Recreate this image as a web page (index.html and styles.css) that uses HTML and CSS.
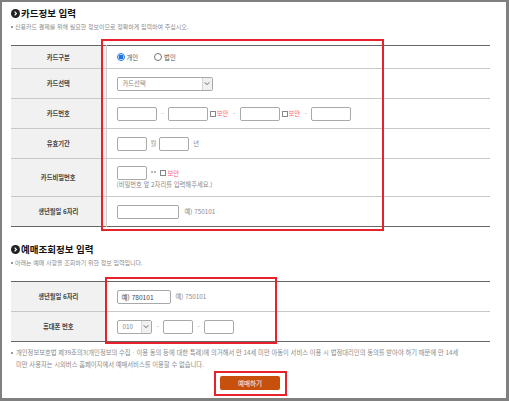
FILE: index.html
```html
<!DOCTYPE html>
<html lang="ko">
<head>
<meta charset="utf-8">
<link rel="stylesheet" href="styles.css">
</head>
<body>
<div class="frame">
  <div class="page">
    <h2 class="sec-title">
      <svg class="sec-icon" viewBox="0 0 10 10" width="9" height="9"><circle cx="5" cy="5" r="5" fill="#222"/><path d="M4 3 L6 5 L4 7" fill="none" stroke="#fff" stroke-width="1.3"/></svg>
      카드정보 입력
    </h2>
    <p class="sec-desc"><span class="bullet"></span>신용카드 결제를 위해 필요한 정보이므로 정확하게 입력하여 주십시오.</p>

    <table class="form-table t1">
      <tr class="r24">
        <th>카드구분</th>
        <td>
          <div class="line">
            <span class="radio on"></span><span class="rlabel">개인</span>
            <span class="radio gap"></span><span class="rlabel">법인</span>
          </div>
        </td>
      </tr>
      <tr class="r30">
        <th>카드선택</th>
        <td>
          <div class="select w96"><span class="sel-text">카드선택</span><span class="sel-arrow"><svg viewBox="0 0 8 6" width="6" height="5"><path d="M1 1.5 L4 4.5 L7 1.5" fill="none" stroke="#555" stroke-width="1.2"/></svg></span></div>
        </td>
      </tr>
      <tr class="r30">
        <th>카드번호</th>
        <td>
          <div class="line">
            <span class="inp w40"></span><span class="dash">-</span><span class="inp w40"></span><span class="chk"></span><span class="sec">보안</span><span class="dash">-</span><span class="inp w40"></span><span class="chk"></span><span class="sec">보안</span><span class="dash">-</span><span class="inp w40"></span>
          </div>
        </td>
      </tr>
      <tr class="r30">
        <th>유효기간</th>
        <td>
          <div class="line">
            <span class="inp w30"></span><span class="unit">월</span><span class="inp w30"></span><span class="unit">년</span>
          </div>
        </td>
      </tr>
      <tr class="r38">
        <th>카드비밀번호</th>
        <td>
          <div class="line">
            <span class="inp w30"></span><span class="stars">**</span><span class="chk"></span><span class="sec">보안</span>
          </div>
          <div class="hint">(비밀번호 앞 2자리를 입력해주세요.)</div>
        </td>
      </tr>
      <tr class="r30 last">
        <th>생년월일 6자리</th>
        <td>
          <div class="line">
            <span class="inp w62"></span><span class="ex">예) 750101</span>
          </div>
        </td>
      </tr>
    </table>

    <h2 class="sec-title s2">
      <svg class="sec-icon" viewBox="0 0 10 10" width="9" height="9"><circle cx="5" cy="5" r="5" fill="#222"/><path d="M4 3 L6 5 L4 7" fill="none" stroke="#fff" stroke-width="1.3"/></svg>
      예매조회정보 입력
    </h2>
    <p class="sec-desc"><span class="bullet"></span>아래는 예매 사항을 조회하기 위한 정보 입력입니다.</p>

    <table class="form-table t2">
      <tr class="r30">
        <th>생년월일 6자리</th>
        <td>
          <div class="line">
            <span class="inp w54 filled">예) 780101</span><span class="ex ex2">예) 750101</span>
          </div>
        </td>
      </tr>
      <tr class="r30 last">
        <th>휴대폰 번호</th>
        <td>
          <div class="line">
            <div class="select w35"><span class="sel-text">010</span><span class="sel-arrow"><svg viewBox="0 0 8 6" width="6" height="5"><path d="M1 1.5 L4 4.5 L7 1.5" fill="none" stroke="#555" stroke-width="1.2"/></svg></span></div><span class="dash">-</span><span class="inp w30"></span><span class="dash">-</span><span class="inp w30"></span>
          </div>
        </td>
      </tr>
    </table>

    <div class="note"><span class="bullet"></span><span class="nl">개인정보보호법 제39조의3(개인정보의 수집ㆍ이용 동의 등에 대한 특례)에 의거해서 만 14세 미만 아동이 서비스 이용 시 법정대리인의 동의를 받아야 하기 때문에 만 14세</span><span class="nl">미만 사용자는 시외버스 홈페이지에서 예매서비스를 이용할 수 없습니다.</span></div>

    <div class="btn-row"><div class="btn">예매하기</div></div>

    <div class="mark m1"></div>
    <div class="mark m2"></div>
    <div class="mark m3"></div>
  </div>
</div>
</body>
</html>
```

FILE: styles.css
```css
* { box-sizing: border-box; }
html, body { margin: 0; padding: 0; }
body {
  background: #808080;
  width: 509px;
  height: 401px;
  overflow: hidden;
  font-family: "Noto Sans CJK KR", "Noto Sans", sans-serif;
}
.frame {
  margin: 2px 0 0 2px;
  width: 504px;
  height: 396px;
  background: #fff;
  overflow: hidden;
}
.page {
  position: relative;
  padding: 5px 17px 0 9px;
  height: 100%;
}
.sec-title {
  margin: 0;
  height: 12px;
  line-height: 12px;
  font-size: 9.5px;
  font-weight: bold;
  color: #111;
  display: flex;
  align-items: center;
  gap: 1px;
}
.sec-title.s2 { margin-top: 16px; }
.sec-icon { display: block; }
.sec-desc {
  margin: 3px 0 0 0;
  height: 10px;
  line-height: 10px;
  font-size: 6px;
  color: #8a8a8a;
  display: flex;
  align-items: center;
}
.bullet {
  display: inline-block;
  width: 2px;
  height: 2px;
  background: #999;
  margin-right: 2px;
  flex: none;
}
.form-table {
  margin-top: 13px;
  width: 479px;
  border-collapse: collapse;
  border-top: 1px solid #666;
  border-bottom: 1px solid #666;
}
.form-table th {
  width: 95px;
  background: #f1f1f1;
  border-right: 1px solid #d0d0d0;
  font-size: 6.3px;
  font-weight: bold;
  color: #444;
  text-align: center;
  padding: 0;
}
.form-table td { padding: 0 0 0 10px; }
.form-table tr { border-bottom: 1px solid #c8c8c8; }
.form-table tr.last { border-bottom: 0; }
.r24 th, .r24 td { height: 23px; }
.r30 th, .r30 td { height: 30px; }
.r38 th, .r38 td { height: 38px; }
.line {
  display: flex;
  align-items: center;
  font-size: 6.3px;
  color: #777;
}
.radio {
  width: 8px;
  height: 8px;
  border: 1px solid #777;
  border-radius: 50%;
  background: #fff;
  flex: none;
}
.radio.on {
  border-color: #1a73e8;
  background: radial-gradient(circle, #1a73e8 0 2.3px, #fff 2.6px);
}
.radio.gap { margin-left: 16px; }
.rlabel { margin-left: 2px; color: #555; }
.inp {
  display: block;
  height: 14px;
  border: 1px solid #a9a9a9;
  border-radius: 2px;
  background: #fff;
  flex: none;
}
.w30 { width: 30px; }
.w40 { width: 40px; }
.w54 { width: 54px; }
.w62 { width: 62px; }
.w35 { width: 35px; }
.w96 { width: 96px; }
.filled {
  font-size: 6.6px;
  color: #444;
  line-height: 12px;
  padding-left: 4px;
}
.dash { margin: 0 4px 0 5px; color: #999; }
.chk {
  width: 6px;
  height: 6px;
  border: 1px solid #888;
  margin-left: 2px;
  flex: none;
  background: #fff;
}
.sec { color: #ff5d7e; margin-left: 1px; }
.unit { margin: 0 3px 0 4px; color: #888; }
.stars { margin: 0 2px 0 4px; color: #777; }
.hint {
  font-size: 6.3px;
  color: #888;
  line-height: 9px;
}
.ex { margin-left: 6px; color: #888; font-size: 6.3px; }
.ex2 { margin-left: 5px; }
.select {
  display: flex;
  height: 14px;
  border: 1px solid #a9a9a9;
  border-radius: 2px;
  background: #fff;
  overflow: hidden;
  flex: none;
}
.sel-text {
  flex: 1;
  font-size: 6.3px;
  color: #888;
  line-height: 12px;
  padding-left: 5px;
}
.sel-arrow {
  width: 10px;
  background: #f0f0f0;
  border-left: 1px solid #d5d5d5;
  display: flex;
  align-items: center;
  justify-content: center;
}
.note {
  margin: 5px 0 0 0;
  font-size: 6.3px;
  line-height: 12px;
  color: #8a8a8a;
  padding-left: 5px;
  position: relative;
}
.nl { display: block; white-space: nowrap; }
.note .bullet {
  position: absolute;
  left: 0;
  top: 5px;
}
.btn-row {
  display: flex;
  justify-content: center;
  margin-top: 5px;
}
.btn {
  width: 60px;
  height: 14px;
  background: #c7500c;
  color: #fff;
  border-radius: 2px;
  font-size: 6.5px;
  line-height: 14px;
  text-align: center;
  white-space: nowrap;
}
.mark {
  position: absolute;
  border: 2px solid #e8222b;
}
.m1 { left: 99px; top: 37px; width: 283px; height: 192px; }
.m2 { left: 103px; top: 275px; width: 172px; height: 67px; }
.m3 { left: 212px; top: 369px; width: 73px; height: 25px; }
```
